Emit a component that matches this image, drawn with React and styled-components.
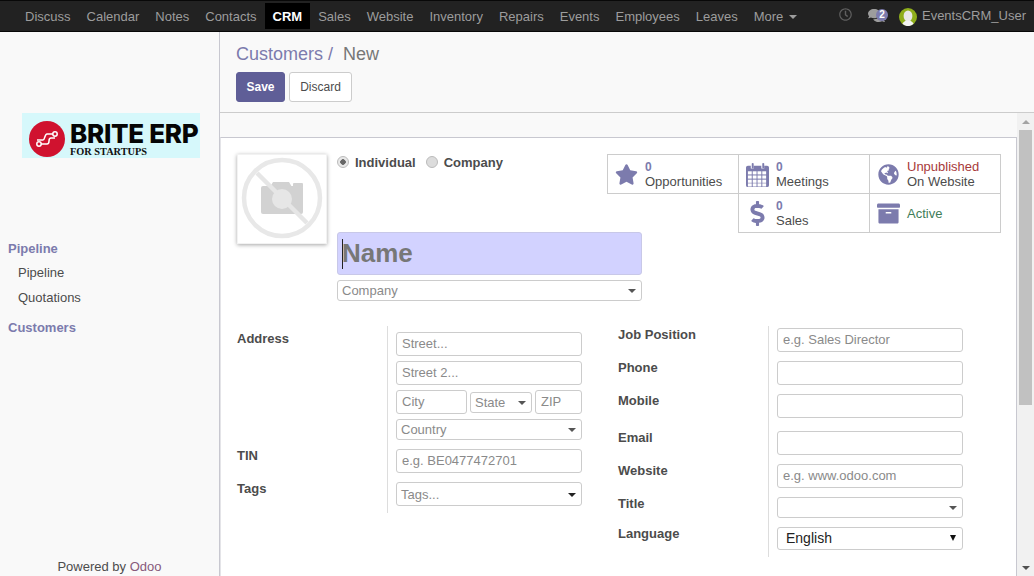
import React from 'react';
import styled, { createGlobalStyle } from 'styled-components';
import { FaStar, FaDollarSign, FaGlobeAmericas, FaArchive, FaRegClock, FaComments } from 'react-icons/fa';

const appItems = ['Discuss', 'Calendar', 'Notes', 'Contacts', 'CRM', 'Sales', 'Website', 'Inventory', 'Repairs', 'Events', 'Employees', 'Leaves'];

function CalendarIcon() {
  return (
    <svg width="23" height="26" viewBox="0 0 24 28" preserveAspectRatio="none">
      <path fill="#7c7bad" d="M2 4h3v3h3V4h8v3h3V4h3a2 2 0 0 1 2 2v19a2 2 0 0 1-2 2H2a2 2 0 0 1-2-2V6a2 2 0 0 1 2-2z" />
      <rect x="6" y="1" width="2" height="6" rx="1" fill="#7c7bad" />
      <rect x="17" y="1" width="2" height="6" rx="1" fill="#7c7bad" />
      <g fill="#fff">
        {[10, 14.5, 19, 23].map((y) =>
          [2, 7, 12, 17].map((x) => <rect key={`${x}-${y}`} x={x} y={y} width="4" height="3.4" />)
        )}
      </g>
    </svg>
  );
}

function NoPhoto() {
  return (
    <svg width="86" height="86" viewBox="0 0 86 86">
      <rect x="22" y="30" width="42" height="28" rx="2" fill="#d2d2d2" />
      <path d="M31 31l3-5h16l3 5z" fill="#d2d2d2" />
      <rect x="54" y="27" width="10" height="5" rx="1" fill="#d2d2d2" />
      <circle cx="43" cy="43" r="10" fill="#e6e6e6" />
      <circle cx="43" cy="42" r="38" fill="none" stroke="#e8e8e8" strokeWidth="4.5" />
      <path d="M18 17 L68 67" stroke="#e6e6e6" strokeWidth="4.5" />
    </svg>
  );
}

function Avatar() {
  return (
    <AvatarImage width="18" height="18" viewBox="0 0 18 18">
      <circle cx="9" cy="9" r="9" fill="#8fae1b" />
      <ellipse cx="9" cy="8" rx="4.4" ry="5.6" fill="#e8e8e8" />
      <path d="M3.5 16c1-3 3.5-3.6 5.5-3.6s4.5.6 5.5 3.6a9 9 0 0 1-11 0z" fill="#f4f4f4" />
    </AvatarImage>
  );
}

function BriteMark() {
  return (
    <svg width="36" height="36" viewBox="0 0 36 36">
      <circle cx="18" cy="18" r="18" fill="#d0122f" />
      <g fill="none" stroke="#fff" strokeWidth="1.5">
        <circle cx="10" cy="23" r="2.2" />
        <circle cx="26" cy="13" r="2.2" />
        <path d="M12 23h6c2 0 2-1.500 2-3s0-3 2-3h4" />
        <path d="M8 19h6c2 0 1.500-6 4-6h6" />
      </g>
    </svg>
  );
}

function StatButton({ icon, count, label, status, tone }) {
  return (
    <Stat>
      <StatIcon>{icon}</StatIcon>
      {status ? (
        <StatText $lift={Boolean(label)}>
          <StatStatus $tone={tone}>{status}</StatStatus>
          {label && <span>{label}</span>}
        </StatText>
      ) : (
        <StatText>
          <StatCount>{count}</StatCount>
          <span>{label}</span>
        </StatText>
      )}
    </Stat>
  );
}

function Row({ label, pad, lab, children }) {
  return (
    <FieldRow>
      <FieldLabel $top={lab}>{label}</FieldLabel>
      <FieldValue $pad={pad}>{children}</FieldValue>
    </FieldRow>
  );
}

function Dropdown({ placeholder, tall, dark }) {
  return (
    <DropBox $tall={tall}>
      <span>{placeholder}</span>
      <Caret $dark={dark} />
    </DropBox>
  );
}

export default function App() {
  return (
    <Page>
      <GlobalStyle />
      <NavBar>
        <AppMenu>
          {appItems.map((item) => (
            <AppLink key={item} $active={item === 'CRM'}>{item}</AppLink>
          ))}
          <AppLink>More <MoreCaret /></AppLink>
        </AppMenu>
        <Systray>
          <TrayIcon><FaRegClock size={13} /></TrayIcon>
          <ChatIcon>
            <FaComments size={17} />
            <ChatBadge>2</ChatBadge>
          </ChatIcon>
          <UserBox><Avatar />EventsCRM_User</UserBox>
        </Systray>
      </NavBar>
      <Body>
        <Sidebar>
          <Logo>
            <BriteMark />
            <LogoText>
              <LogoName>BRITE ERP</LogoName>
              <LogoSub>FOR STARTUPS</LogoSub>
            </LogoText>
          </Logo>
          <SideMenu>
            <SideHead>Pipeline</SideHead>
            <SideItem>Pipeline</SideItem>
            <SideItem>Quotations</SideItem>
            <SideHead $second>Customers</SideHead>
          </SideMenu>
          <Powered>Powered by <b>Odoo</b></Powered>
        </Sidebar>
        <Main>
          <ControlPanel>
            <Crumbs><a>Customers</a> /<CrumbNow>New</CrumbNow></Crumbs>
            <Buttons>
              <SaveButton>Save</SaveButton>
              <DiscardButton>Discard</DiscardButton>
            </Buttons>
          </ControlPanel>
          <Content>
            <Sheet>
              <Head>
                <PhotoFrame><NoPhoto /></PhotoFrame>
                <Radios>
                  <RadioLabel><Radio type="radio" name="kind" defaultChecked />Individual</RadioLabel>
                  <RadioLabel><Radio type="radio" name="kind" />Company</RadioLabel>
                </Radios>
                <StatGrid>
                  <StatButton icon={<FaStar size={23} />} count="0" label="Opportunities" />
                  <StatButton icon={<CalendarIcon />} count="0" label="Meetings" />
                  <StatButton icon={<FaGlobeAmericas size={21} />} status="Unpublished" tone="#a83a3a" label="On Website" />
                  <StatSpacer />
                  <StatButton icon={<FaDollarSign size={25} />} count="0" label="Sales" />
                  <StatButton icon={<FaArchive size={23} />} status="Active" tone="#3f7d5a" />
                </StatGrid>
                <NameBlock>
                  <NameWrap>
                    <NameInput placeholder="Name" />
                    <TextCursor />
                  </NameWrap>
                  <Dropdown placeholder="Company" />
                </NameBlock>
              </Head>
              <Groups>
                <Group>
                  <Row label="Address" pad={6} lab={5}>
                    <Stack>
                      <TextField placeholder="Street..." />
                      <TextField placeholder="Street 2..." />
                      <CityRow>
                        <TextField placeholder="City" />
                        <Dropdown placeholder="State" />
                        <TextField placeholder="ZIP" />
                      </CityRow>
                      <Dropdown placeholder="Country" />
                    </Stack>
                  </Row>
                  <Row label="TIN" pad={9} lab={8}><TextField placeholder="e.g. BE0477472701" /></Row>
                  <Row label="Tags" pad={9} lab={8}>
                    <Dropdown placeholder="Tags..." dark tall />
                  </Row>
                </Group>
                <Group>
                  <Row label="Job Position" pad={2} lab={1}><TextField placeholder="e.g. Sales Director" /></Row>
                  <Row label="Phone" pad={9} lab={8}><TextField /></Row>
                  <Row label="Mobile" pad={9} lab={8}><TextField /></Row>
                  <Row label="Email" pad={13} lab={12}><TextField /></Row>
                  <Row label="Website" pad={9} lab={8}><TextField placeholder="e.g. www.odoo.com" /></Row>
                  <Row label="Title" pad={9} lab={8}><Dropdown placeholder="" /></Row>
                  <Row label="Language" pad={9} lab={8}>
                    <SelectWrap>
                      <LanguageSelect defaultValue="English">
                        <option>English</option>
                      </LanguageSelect>
                      <SelectArrow />
                    </SelectWrap>
                  </Row>
                </Group>
              </Groups>
            </Sheet>
            <ScrollBar>
              <ScrollArrow />
              <ScrollThumb />
              <ScrollArrow $down />
            </ScrollBar>
          </Content>
        </Main>
      </Body>
    </Page>
  );
}

const GlobalStyle = createGlobalStyle`
  html, body {
    margin: 0;
    padding: 0;
    height: 100%;
    overflow: hidden;
  }
  body {
    font-family: "Liberation Sans", Arial, sans-serif;
    font-size: 13px;
    color: #4c4c4c;
  }
  * { box-sizing: border-box; }
`;

const Page = styled.div`
  display: flex;
  flex-direction: column;
  width: 1034px;
  height: 576px;
  overflow: hidden;
  background: #f9f9f9;
`;

const NavBar = styled.nav`
  display: flex;
  justify-content: space-between;
  flex: 0 0 32px;
  height: 32px;
  background: #222;
  border-top: 1px solid #080808;
  border-bottom: 1px solid #080808;
`;

const AppMenu = styled.div`
  display: flex;
  padding: 2px 0 2px 17px;
`;

const AppLink = styled.a`
  display: flex;
  align-items: center;
  gap: 6px;
  height: 26px;
  padding: 0 8px;
  white-space: nowrap;
  color: ${(p) => (p.$active ? '#fff' : '#9d9d9d')};
  background: ${(p) => (p.$active ? '#000' : 'transparent')};
  font-weight: ${(p) => (p.$active ? 700 : 400)};
`;

const MoreCaret = styled.i`
  width: 0;
  height: 0;
  margin-top: 2px;
  border-left: 4px solid transparent;
  border-right: 4px solid transparent;
  border-top: 4px solid #9d9d9d;
`;

const Systray = styled.div`
  display: flex;
  align-items: center;
  padding: 0 8px 2px 0;
`;

const TrayIcon = styled.span`
  display: flex;
  padding-bottom: 2px;
  color: #5f5f5f;
  margin-right: 16px;
`;

const ChatIcon = styled.span`
  position: relative;
  display: flex;
  width: 20px;
  margin-right: 11px;
  color: #9d9d9d;
`;

const ChatBadge = styled.b`
  position: absolute;
  right: 0;
  top: 2px;
  width: 12px;
  height: 12px;
  border-radius: 50%;
  background: #7c7bad;
  color: #fff;
  font-size: 10px;
  line-height: 12px;
  text-align: center;
`;

const UserBox = styled.span`
  display: flex;
  align-items: center;
  gap: 5px;
  color: #9d9d9d;
`;

const AvatarImage = styled.svg`
  margin-top: 4px;
`;

const Body = styled.div`
  display: flex;
  flex: 1;
  min-height: 0;
`;

const Sidebar = styled.aside`
  display: flex;
  flex-direction: column;
  flex: 0 0 220px;
  border-right: 1px solid #c8c8d0;
  background: #f9f9f9;
`;

const Logo = styled.div`
  display: flex;
  align-items: flex-start;
  gap: 5px;
  width: 178px;
  height: 45px;
  margin: 81px 0 0 22px;
  padding: 8px 0 0 7px;
  background: #d6f8fb;
`;

const LogoText = styled.div`
  display: flex;
  flex-direction: column;
  gap: 1px;
`;

const LogoName = styled.span`
  font-family: Inter, sans-serif;
  font-weight: 800;
  font-size: 26px;
  line-height: 25px;
  letter-spacing: -0.3px;
  color: #050505;
  white-space: nowrap;
`;

const LogoSub = styled.span`
  font-family: "Liberation Serif", serif;
  font-weight: 700;
  font-size: 10.3px;
  line-height: 9px;
  color: #111;
  white-space: nowrap;
`;

const SideMenu = styled.div`
  display: flex;
  flex-direction: column;
  margin-top: 82px;
`;

const SideHead = styled.div`
  height: 18px;
  line-height: 18px;
  padding-left: 8px;
  margin-top: ${(p) => (p.$second ? '11px' : '0')};
  color: #7c7bad;
  font-weight: 700;
`;

const SideItem = styled.div`
  height: 25px;
  padding: 6px 0 0 18px;
  line-height: 18px;
  color: #4c4c4c;
`;

const Powered = styled.div`
  margin-top: auto;
  height: 18px;
  line-height: 18px;
  text-align: center;

  b {
    font-weight: 400;
    color: #875a7b;
  }
`;

const Main = styled.main`
  display: flex;
  flex-direction: column;
  flex: 1;
  min-width: 0;
`;

const ControlPanel = styled.header`
  flex: 0 0 81px;
  padding: 11px 16px 0;
  border-bottom: 1px solid #ccc;
  background: #f9f9f9;
`;

const Crumbs = styled.div`
  height: 22px;
  font-size: 18px;
  line-height: 22px;
  color: #7c7bad;
  white-space: nowrap;
`;

const CrumbNow = styled.span`
  margin-left: 10px;
  color: #777;
`;

const Buttons = styled.div`
  display: flex;
  gap: 4px;
  margin-top: 7px;
`;

const SaveButton = styled.button`
  width: 49px;
  height: 30px;
  padding: 0;
  border: 1px solid #5f5e97;
  border-radius: 3px;
  background: #5f5e97;
  color: #fff;
  font: 700 12px "Liberation Sans", Arial, sans-serif;
`;

const DiscardButton = styled.button`
  width: 63px;
  height: 30px;
  padding: 0;
  border: 1px solid #ccc;
  border-radius: 3px;
  background: #fff;
  color: #4c4c4c;
  font: 400 12px "Liberation Sans", Arial, sans-serif;
`;

const Content = styled.div`
  display: flex;
  flex: 1;
  min-height: 0;
`;

const Sheet = styled.section`
  flex: 0 0 797px;
  margin-top: 24px;
  padding: 15px 16px 0;
  background: #fff;
  border-top: 1px solid #c8c8d0;
  border-right: 1px solid #c8c8d0;
  border-left: 1px solid #e4e4e8;
  overflow: hidden;
`;

const Head = styled.div`
  display: grid;
  grid-template-columns: 100px 270px 394px;
  grid-template-rows: 79px auto;
`;

const PhotoFrame = styled.div`
  grid-row: 1 / span 2;
  width: 90px;
  height: 90px;
  margin-top: 1px;
  padding: 1px;
  background: #fff;
  border: 1px solid #f2f2f2;
  box-shadow: 0 1px 4px rgba(0, 0, 0, 0.35);
`;

const Radios = styled.div`
  display: flex;
  gap: 10px;
  align-items: flex-start;
  padding-top: 1px;
`;

const RadioLabel = styled.label`
  display: flex;
  align-items: center;
  gap: 6px;
  height: 16px;
  font-weight: 700;
`;

const Radio = styled.input`
  appearance: none;
  width: 12px;
  height: 12px;
  margin: 0;
  border: 1px solid #bbb;
  border-radius: 50%;
  background: #dcdcdc;

  &:checked {
    background: radial-gradient(circle, #666 0, #666 2.5px, #e8e8e8 3px);
  }
`;

const StatGrid = styled.div`
  display: grid;
  grid-template-columns: 132px 131px 131px;
  grid-auto-rows: 39px;
  margin-top: 1px;
  height: 79px;
  border-top: 1px solid #ccc;
`;

const Stat = styled.div`
  display: flex;
  align-items: center;
  gap: 7px;
  height: 39px;
  padding: 1px 0 0 7px;
  background: #fff;
  border-right: 1px solid #ccc;
  border-bottom: 1px solid #ccc;

  &:first-child {
    border-left: 1px solid #ccc;
  }
  &:nth-child(5) {
    margin-left: -1px;
    border-left: 1px solid #ccc;
  }
`;

const StatSpacer = styled.div`
  height: 39px;
`;

const StatIcon = styled.span`
  display: flex;
  justify-content: center;
  flex: 0 0 23px;
  min-width: 0;
  color: #7c7bad;
`;

const StatText = styled.div`
  display: flex;
  flex-direction: column;
  margin-bottom: ${(p) => (p.$lift ? '2px' : '0')};
  line-height: 15px;
  color: #4c4c4c;
  white-space: nowrap;
`;

const StatCount = styled.b`
  font-size: 12px;
  line-height: 14px;
  color: #7c7bad;
`;

const StatStatus = styled.span`
  color: ${(p) => p.$tone};
`;

const NameBlock = styled.div`
  grid-column: 2 / span 2;
  width: 305px;
`;

const NameWrap = styled.div`
  position: relative;
  height: 43px;
  margin-bottom: 5px;
`;

const NameInput = styled.input`
  display: block;
  width: 100%;
  height: 43px;
  padding: 0 4px;
  border: 1px solid #c8c8e8;
  border-radius: 3px;
  outline: none;
  background: #d2d2ff;
  font: 700 26px "Liberation Sans", Arial, sans-serif;

  &::placeholder {
    color: #777;
    opacity: 1;
  }
`;

const TextCursor = styled.span`
  position: absolute;
  left: 5px;
  top: 7px;
  width: 1px;
  height: 30px;
  background: #222;
`;

const Groups = styled.div`
  display: flex;
  gap: 36px;
  margin-top: 25px;
`;

const Group = styled.div`
  flex: 0 0 345px;
  height: fit-content;
`;

const FieldRow = styled.div`
  display: grid;
  grid-template-columns: 150px 195px;

  &:last-child > div:last-child {
    padding-bottom: 7px;
  }
`;

const FieldLabel = styled.label`
  padding-top: ${(p) => p.$top}px;
  font-weight: 700;
  line-height: 16px;
`;

const FieldValue = styled.div`
  padding: ${(p) => p.$pad}px 0 0 8px;
  border-left: 1px solid #ddd;
`;

const Stack = styled.div`
  display: flex;
  flex-direction: column;
  gap: 5px;
`;

const CityRow = styled.div`
  display: grid;
  grid-template-columns: 71px 62px 47px;
  gap: 3px;
  align-items: center;
`;

const TextField = styled.input`
  display: block;
  width: 100%;
  height: 24px;
  padding: 0 4px 1px 5px;
  border: 1px solid #ccc;
  border-radius: 3px;
  outline: none;
  background: #fff;
  font: 400 13px "Liberation Sans", Arial, sans-serif;

  &::placeholder {
    color: #8a8a8a;
    opacity: 1;
  }
`;

const DropBox = styled.div`
  display: flex;
  align-items: center;
  justify-content: space-between;
  width: 100%;
  height: ${(p) => (p.$tall ? '24px' : '21px')};
  padding: 0 5px 0 4px;
  border: 1px solid #ccc;
  border-radius: 3px;
  background: #fff;
  color: #8a8a8a;
  line-height: 19px;
`;

const Caret = styled.i`
  width: 0;
  height: 0;
  margin-top: 1px;
  border-left: 4px solid transparent;
  border-right: 4px solid transparent;
  border-top: 4px solid ${(p) => (p.$dark ? '#222' : '#555')};
`;

const SelectWrap = styled.div`
  position: relative;
`;

const LanguageSelect = styled.select`
  display: block;
  width: 100%;
  height: 23px;
  padding: 0 0 1px 8px;
  appearance: none;
  border: 1px solid #ccc;
  border-radius: 3px;
  background: #fff;
  color: #222;
  font: 400 14px "Liberation Sans", Arial, sans-serif;
`;

const SelectArrow = styled.i`
  position: absolute;
  right: 7px;
  top: 8px;
  width: 0;
  height: 0;
  border-left: 3.5px solid transparent;
  border-right: 3.5px solid transparent;
  border-top: 6px solid #111;
  pointer-events: none;
`;

const ScrollBar = styled.div`
  display: flex;
  flex-direction: column;
  flex: 0 0 17px;
  padding: 0 2px;
  background: #f1f1f1;
`;

const ScrollArrow = styled.i`
  flex: 0 0 17px;
  display: flex;
  justify-content: center;
  align-items: center;
  margin-top: ${(p) => (p.$down ? 'auto' : '0')};

  &::after {
    content: '';
    width: 0;
    height: 0;
    border-left: 4px solid transparent;
    border-right: 4px solid transparent;
    ${(p) => (p.$down ? 'border-top: 4px solid #505050;' : 'border-bottom: 4px solid #a3a3a3;')}
  }
`;

const ScrollThumb = styled.div`
  flex: 0 0 275px;
  background: #c1c1c1;
`;
